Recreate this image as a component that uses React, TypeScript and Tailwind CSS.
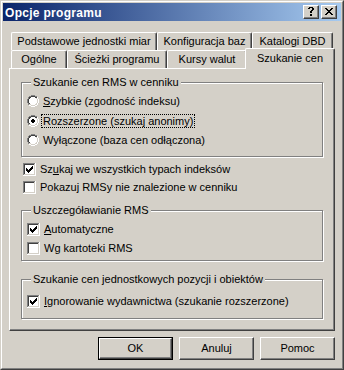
import React from 'react';

const COLORS: Record<string, string> = {
  G: '#808080',
  D: '#404040',
  W: '#ffffff',
  L: '#d4d0c8',
  X: '#000000',
};

function Pixels({ rows }: { rows: string[] }) {
  const h = rows.length;
  const w = rows[0].length;
  const rects: React.ReactNode[] = [];
  rows.forEach((r, y) =>
    r.split('').forEach((c, x) => {
      if (COLORS[c]) {
        rects.push(<rect key={`${x}-${y}`} x={x} y={y} width={1} height={1} fill={COLORS[c]} />);
      }
    })
  );
  return (
    <svg width={w} height={h} viewBox={`0 0 ${w} ${h}`} shapeRendering="crispEdges" className="block shrink-0">
      {rects}
    </svg>
  );
}

function overlay(base: string[], top: string[], ox: number, oy: number) {
  const out = base.map((r) => r.split(''));
  top.forEach((r, y) =>
    r.split('').forEach((c, x) => {
      if (c !== '.') out[oy + y][ox + x] = c;
    })
  );
  return out.map((r) => r.join(''));
}

const RADIO = [
  '....GGGG....',
  '..GGDDDDGG..',
  '.GDDWWWWDDW.',
  '.GDWWWWWWLW.',
  'GDWWWWWWWWLW',
  'GDWWWWWWWWLW',
  'GDWWWWWWWWLW',
  'GDWWWWWWWWLW',
  '.GDWWWWWWLW.',
  '.GLLWWWWLLW.',
  '..WWLLLLWW..',
  '....WWWW....',
];
const DOT = ['.XX.', 'XXXX', 'XXXX', '.XX.'];

const CHECK = [
  'GGGGGGGGGGGGW',
  'GDDDDDDDDDDLW',
  'GDWWWWWWWWWLW',
  'GDWWWWWWWWWLW',
  'GDWWWWWWWWWLW',
  'GDWWWWWWWWWLW',
  'GDWWWWWWWWWLW',
  'GDWWWWWWWWWLW',
  'GDWWWWWWWWWLW',
  'GDWWWWWWWWWLW',
  'GDWWWWWWWWWLW',
  'GLLLLLLLLLLLW',
  'WWWWWWWWWWWWW',
];
const MARK = ['......X', '.....XX', 'X...XXX', 'XX.XXX.', 'XXXXX..', '.XXX...', '..X....'];

const CLOSE = ['XX....XX', '.XX..XX.', '..XXXX..', '...XX...', '..XXXX..', '.XX..XX.', 'XX....XX'];
const HELP = ['.XXXX.', 'XX..XX', '....XX', '...XX.', '..XX..', '..XX..', '......', '..XX..', '..XX..'];

function Radio({ checked }: { checked?: boolean }) {
  return <Pixels rows={checked ? overlay(RADIO, DOT, 4, 4) : RADIO} />;
}

function Check({ checked }: { checked?: boolean }) {
  return <Pixels rows={checked ? overlay(CHECK, MARK, 3, 3) : CHECK} />;
}

function CapButton({ glyph, pad }: { glyph: string[]; pad: string }) {
  return (
    <div className="w-[16px] h-[14px] bg-[#d4d0c8] border border-t-white border-l-white border-r-[#404040] border-b-[#404040] shadow-[inset_-1px_-1px_0_#808080]">
      <div className={pad}>
        <Pixels rows={glyph} />
      </div>
    </div>
  );
}

function Tab({ w, children }: { w: string; children: React.ReactNode }) {
  return (
    <div
      className={`${w} shrink-0 h-full flex items-center justify-center whitespace-nowrap bg-[#d4d0c8] border-l border-t border-r border-l-white border-t-white border-r-[#404040] rounded-t-[2px] shadow-[inset_-1px_0_0_#808080]`}
    >
      {children}
    </div>
  );
}

function Group({
  label,
  className,
  children,
}: {
  label: string;
  className: string;
  children: React.ReactNode;
}) {
  return (
    <div className={`relative border border-[#808080] shadow-[1px_1px_0_#ffffff,inset_1px_1px_0_#ffffff] ${className}`}>
      <span className="absolute -top-[7px] left-[9px] px-[2px] bg-[#d4d0c8] leading-[13px] whitespace-nowrap">
        {label}
      </span>
      {children}
    </div>
  );
}

function RadioRow({
  h,
  checked,
  focused,
  children,
}: {
  h: string;
  checked?: boolean;
  focused?: boolean;
  children: React.ReactNode;
}) {
  return (
    <div className={`${h} flex items-center`}>
      <Radio checked={checked} />
      <span
        className={`ml-[2px] px-[1px] leading-[12px] whitespace-nowrap border ${
          focused ? 'border-dotted border-black' : 'border-transparent'
        }`}
      >
        {children}
      </span>
    </div>
  );
}

function CheckRow({ h, checked, children }: { h: string; checked?: boolean; children: React.ReactNode }) {
  return (
    <div className={`${h} flex items-center gap-[4px]`}>
      <Check checked={checked} />
      <span className="whitespace-nowrap">{children}</span>
    </div>
  );
}

function PushButton({ children, isDefault }: { children: React.ReactNode; isDefault?: boolean }) {
  const inner = (
    <div className="w-full h-full flex items-center justify-center bg-[#d4d0c8] border border-t-white border-l-white border-r-[#404040] border-b-[#404040] shadow-[inset_-1px_-1px_0_#808080]">
      {children}
    </div>
  );
  return (
    <div className={`w-[75px] h-[23px] ${isDefault ? 'border border-black' : ''}`}>{inner}</div>
  );
}

export default function App() {
  return (
    <div className="w-[344px] h-[370px] overflow-hidden bg-[#d4d0c8] border border-t-[#d4d0c8] border-l-[#d4d0c8] border-r-[#404040] border-b-[#404040] font-['Liberation_Sans',Arial,sans-serif] text-[11px] leading-[13px] text-black select-none">
      <div className="h-full flex flex-col border border-t-white border-l-white border-r-[#808080] border-b-[#808080] p-[1px]">
        {/* Title bar */}
        <div className="h-[18px] shrink-0 flex items-start justify-between bg-[linear-gradient(to_right,#0a246a,#a6caf0)]">
          <span className="ml-[2px] mt-[3px] text-white font-bold text-[12px] leading-[14px] tracking-[0.3px] whitespace-nowrap">
            Opcje programu
          </span>
          <div className="flex gap-[2px] mt-[2px] mr-[4px]">
            <CapButton glyph={HELP} pad="pl-[4px] pt-[1px]" />
            <CapButton glyph={CLOSE} pad="pl-[3px] pt-[2px]" />
          </div>
        </div>

        {/* Body */}
        <div className="flex-1 px-[6px] pt-[11px]">
          {/* Tabs */}
          <div className="pl-[2px]">
            <div className="flex h-[18px]">
              <Tab w="w-[146px]">Podstawowe jednostki miar</Tab>
              <Tab w="w-[95px]">Konfiguracja baz</Tab>
              <Tab w="w-[81px]">Katalogi DBD</Tab>
            </div>
            <div className="relative z-10 flex items-start h-[18px]">
              <Tab w="w-[56px]">Ogólne</Tab>
              <Tab w="w-[100px]">Ścieżki programu</Tab>
              <Tab w="w-[80px]">Kursy walut</Tab>
              <div className="relative w-[90px] h-[21px] -mt-[2px] -ml-[2px] shrink-0 flex items-center justify-center pb-[2px] whitespace-nowrap bg-[#d4d0c8] border-l border-t border-r border-l-white border-t-white border-r-[#404040] rounded-t-[2px] shadow-[inset_-1px_0_0_#808080]">
                Szukanie cen
              </div>
            </div>
          </div>

          {/* Panel */}
          <div className="w-[326px] h-[263px] flex flex-col px-[11px] pt-[13px] border border-t-white border-l-white border-r-[#404040] border-b-[#404040] shadow-[inset_-1px_-1px_0_#808080]">
            <Group label="Szukanie cen RMS w cenniku" className="pt-[8px] pb-[6px] pl-[5px]">
              <RadioRow h="h-[20px]">
                <span className="underline">S</span>zybkie (zgodność indeksu)
              </RadioRow>
              <RadioRow h="h-[19px]" checked focused>
                Rozszerzone (szukaj anonimy)
              </RadioRow>
              <RadioRow h="h-[20px]">Wyłączone (baza cen odłączona)</RadioRow>
            </Group>

            <div className="mt-[3px] pl-[2px]">
              <CheckRow h="h-[18px]" checked>
                Sz<span className="underline">u</span>kaj we wszystkich typach indeksów
              </CheckRow>
              <CheckRow h="h-[18px]">Pokazuj RMSy nie znalezione w cenniku</CheckRow>
            </div>

            <Group label="Uszczegóławianie RMS" className="mt-[14px] pt-[9px] pb-[2px] pl-[5px]">
              <CheckRow h="h-[19px]" checked>
                <span className="underline">A</span>utomatyczne
              </CheckRow>
              <CheckRow h="h-[19px]">Wg kartoteki RMS</CheckRow>
            </Group>

            <Group
              label="Szukanie cen jednostkowych pozycji i obiektów"
              className="mt-[18px] pt-[12px] pb-[7px] pl-[5px]"
            >
              <CheckRow h="h-[19px]" checked>
                <span className="underline">I</span>gnorowanie wydawnictwa (szukanie rozszerzone)
              </CheckRow>
            </Group>
          </div>

          {/* Buttons */}
          <div className="mt-[6px] flex justify-end gap-[6px]">
            <PushButton isDefault>OK</PushButton>
            <PushButton>Anuluj</PushButton>
            <PushButton>Pomoc</PushButton>
          </div>
        </div>
      </div>
    </div>
  );
}
